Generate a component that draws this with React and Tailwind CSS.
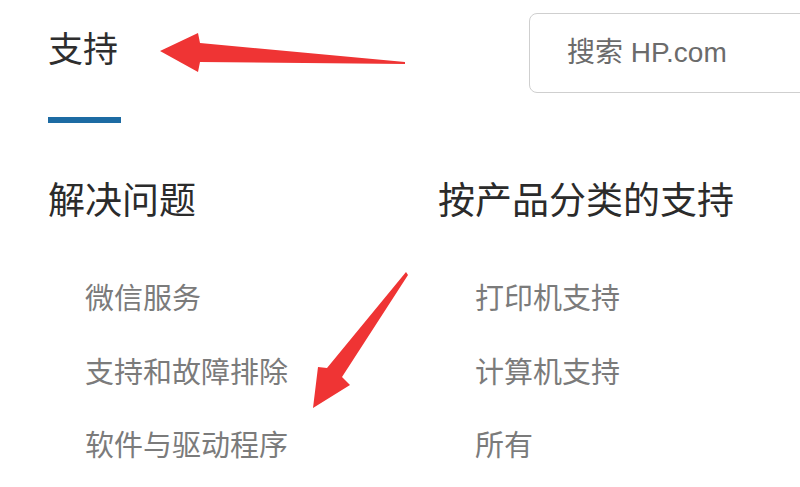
import React from "react";

const cjk = "font-['Noto_Sans_CJK_SC','Noto_Sans',sans-serif]";

function Column({ title, items }) {
  return (
    <div className="flex flex-col">
      <h2 className={`${cjk} text-[37px] leading-[37px] text-[#2b2b2b] font-normal whitespace-nowrap`}>{title}</h2>
      <ul className="mt-[65px] pl-[37px] flex flex-col gap-[44.5px]">
        {items.map((t) => (
          <li key={t} className={`${cjk} text-[29px] leading-[29px] text-[#7b7b7b] whitespace-nowrap`}>
            {t}
          </li>
        ))}
      </ul>
    </div>
  );
}

export default function App() {
  return (
    <div className="relative w-[800px] h-[487px] bg-white overflow-hidden">
      <div className="flex items-start pl-12">
        <h1 className={`${cjk} pt-[29px] text-[35px] leading-[35px] text-[#2e2e2e] font-normal`}>支持</h1>
        <div className="ml-auto -mr-[29px] mt-[13px] w-[300px] h-[80px] shrink-0 border border-[#cfcfcf] rounded-[8px] flex items-center pl-[37px]">
          <span className="font-['Liberation_Sans','Noto_Sans_CJK_SC',sans-serif] text-[28px] text-[#6b6b6b] leading-none">
            搜索 HP.com
          </span>
        </div>
      </div>
      <div className="ml-12 mt-[24px] w-[73px] h-[6px] bg-[#1d6ba3]" />
      <div className="mt-[57px] pl-12 grid grid-cols-[390px_1fr]">
        <Column title="解决问题" items={["微信服务", "支持和故障排除", "软件与驱动程序"]} />
        <Column title="按产品分类的支持" items={["打印机支持", "计算机支持", "所有"]} />
      </div>
      <svg className="absolute inset-0 pointer-events-none" width="800" height="487" viewBox="0 0 800 487">
        <polygon
          points="160,51 198,33 200,43 405,62 405,64 200,62 198,72"
          fill="#ef3434"
        />
        <polygon
          points="406,272 408,275 342,377 350,385 313,408 318,367 327,368"
          fill="#ef3434"
        />
      </svg>
    </div>
  );
}
